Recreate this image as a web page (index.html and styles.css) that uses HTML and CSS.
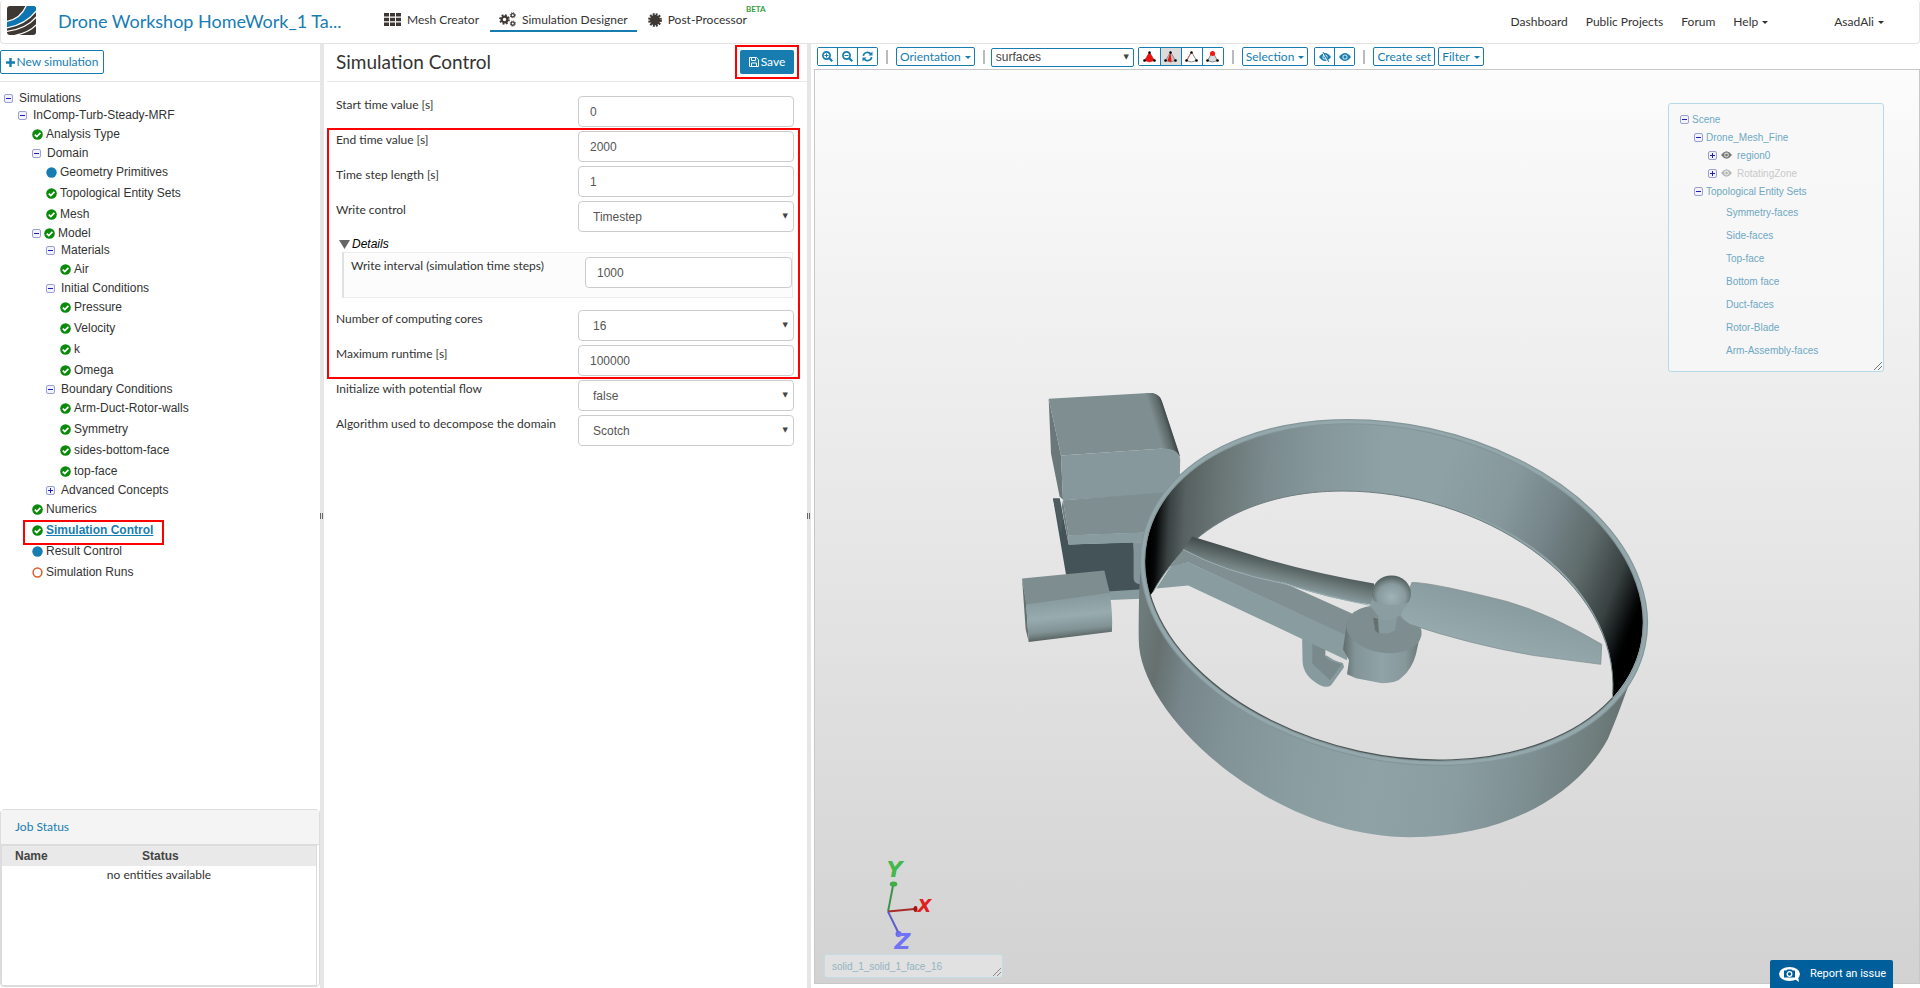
FILE: index.html
```html
<!DOCTYPE html>
<html lang="en">
<head>
<meta charset="utf-8">
<title>Simulation Designer</title>
<link rel="stylesheet" href="styles.css">
</head>
<body>
<svg class="defs" width="0" height="0" aria-hidden="true">
  <symbol id="minus" viewBox="0 0 9 9"><rect x=".5" y=".5" width="8" height="8" rx="1.5" fill="#f2f2fc" stroke="#9aa0d0"/><path d="M2 4.5h5" stroke="#2020b0"/></symbol>
  <symbol id="plus" viewBox="0 0 9 9"><rect x=".5" y=".5" width="8" height="8" rx="1.5" fill="#f2f2fc" stroke="#9aa0d0"/><path d="M2 4.5h5M4.5 2v5" stroke="#2020b0"/></symbol>
  <symbol id="ok" viewBox="0 0 11 11"><circle cx="5.5" cy="5.5" r="5.3" fill="#0a8a0a"/><path d="M2.8 5.6l2 2 3.6-3.7" fill="none" stroke="#fff" stroke-width="1.7"/></symbol>
  <symbol id="dot" viewBox="0 0 11 11"><circle cx="5.5" cy="5.5" r="5.2" fill="#177db1"/></symbol>
  <symbol id="ring" viewBox="0 0 11 11"><circle cx="5.5" cy="5.5" r="4.4" fill="none" stroke="#dd5a2b" stroke-width="1.5"/></symbol>
  <symbol id="eye" viewBox="0 0 12 8"><path d="M0 4Q6-4 12 4Q6 12 0 4z" fill="currentColor"/><circle cx="6" cy="4" r="2.6" fill="#fff" opacity=".75"/><circle cx="6" cy="4" r="1.5" fill="currentColor"/></symbol>
  <symbol id="cog" viewBox="0 0 12 12"><circle cx="6" cy="6" r="3.1" fill="none" stroke="currentColor" stroke-width="2.4"/><circle cx="6" cy="6" r="4.9" fill="none" stroke="currentColor" stroke-width="1.8" stroke-dasharray="2 1.85"/></symbol>
</svg>

<header class="topbar">
  <a class="logo" href="#" aria-label="Home">
    <svg width="29" height="29" viewBox="0 0 29 29">
      <clipPath id="logoclip"><rect width="29" height="29" rx="3"/></clipPath>
      <g clip-path="url(#logoclip)">
        <rect width="29" height="29" fill="#3d3833"/>
        <path d="M0 15.500Q14 13 19.500 0H29V5Q19 19 0 22z" fill="#0d76b0"/>
        <path d="M-1 15.500Q14 13 19.500-1M-1 22Q19 19 30 4M-1 25.500Q20 23 30 10M8 29.500Q23 26 30 18" fill="none" stroke="#fff" stroke-width="1.300"/>
      </g>
    </svg>
  </a>
  <a class="project" href="#">Drone Workshop HomeWork_1 Ta...</a>
  <nav class="modes">
    <a href="#" class="mode">
      <svg width="17" height="13" viewBox="0 0 17 13" fill="#3d3833"><path d="M0 0h5v3.500H0zM6 0h5v3.500H6zM12 0h5v3.500h-5zM0 4.700h5v3.500H0zM6 4.700h5v3.500H6zM12 4.700h5v3.500h-5zM0 9.400h5v3.500H0zM6 9.400h5v3.500H6zM12 9.400h5v3.500h-5z"/></svg>
      Mesh Creator</a>
    <a href="#" class="mode active">
      <svg width="17" height="15" viewBox="0 0 17 15"><use href="#cog" x="0" y="2" width="11" height="11"/><use href="#cog" x="10.500" y="0" width="6.500" height="6.500"/><use href="#cog" x="10.500" y="8.300" width="6.500" height="6.500"/></svg>
      Simulation Designer</a>
    <a href="#" class="mode">
      <svg width="14" height="14" viewBox="0 0 14 14"><circle cx="7" cy="7" r="5.200" fill="#3d3833"/><circle cx="7" cy="7" r="5.800" fill="none" stroke="#3d3833" stroke-width="2.200" stroke-dasharray="1.900 1.140"/></svg>
      Post-Processor<sup class="beta">BETA</sup></a>
  </nav>
  <nav class="links">
    <a href="#">Dashboard</a>
    <a href="#">Public Projects</a>
    <a href="#">Forum</a>
    <a href="#" class="caret">Help</a>
    <a href="#" class="caret user">AsadAli</a>
  </nav>
</header>

<main class="workspace">
  <aside class="sidebar">
    <div class="sidebar-head"><button class="btn-outline" type="button"><svg width="9" height="9" viewBox="0 0 9 9"><path d="M4.500 0v9M0 4.500h9" stroke="currentColor" stroke-width="2.400"/></svg>New simulation</button></div>
    <ul class="tree">
      <li><span class="folder"><svg class="tg"><use href="#minus"/></svg>Simulations</span>
      <ul>
        <li><span class="folder"><svg class="tg"><use href="#minus"/></svg>InComp-Turb-Steady-MRF</span>
        <ul>
          <li class="leaf"><svg class="st"><use href="#ok"/></svg>Analysis Type</li>
          <li><span class="folder"><svg class="tg"><use href="#minus"/></svg>Domain</span>
            <ul>
              <li class="leaf"><svg class="st"><use href="#dot"/></svg>Geometry Primitives</li>
              <li class="leaf"><svg class="st"><use href="#ok"/></svg>Topological Entity Sets</li>
              <li class="leaf"><svg class="st"><use href="#ok"/></svg>Mesh</li>
            </ul></li>
          <li><span class="folder tight"><svg class="tg"><use href="#minus"/></svg><svg class="st"><use href="#ok"/></svg>Model</span>
            <ul>
              <li><span class="folder"><svg class="tg"><use href="#minus"/></svg>Materials</span>
                <ul><li class="leaf"><svg class="st"><use href="#ok"/></svg>Air</li></ul></li>
              <li><span class="folder"><svg class="tg"><use href="#minus"/></svg>Initial Conditions</span>
                <ul>
                  <li class="leaf"><svg class="st"><use href="#ok"/></svg>Pressure</li>
                  <li class="leaf"><svg class="st"><use href="#ok"/></svg>Velocity</li>
                  <li class="leaf"><svg class="st"><use href="#ok"/></svg>k</li>
                  <li class="leaf"><svg class="st"><use href="#ok"/></svg>Omega</li>
                </ul></li>
              <li><span class="folder"><svg class="tg"><use href="#minus"/></svg>Boundary Conditions</span>
                <ul>
                  <li class="leaf"><svg class="st"><use href="#ok"/></svg>Arm-Duct-Rotor-walls</li>
                  <li class="leaf"><svg class="st"><use href="#ok"/></svg>Symmetry</li>
                  <li class="leaf"><svg class="st"><use href="#ok"/></svg>sides-bottom-face</li>
                  <li class="leaf"><svg class="st"><use href="#ok"/></svg>top-face</li>
                </ul></li>
              <li><span class="folder"><svg class="tg"><use href="#plus"/></svg>Advanced Concepts</span></li>
            </ul></li>
          <li class="leaf"><svg class="st"><use href="#ok"/></svg>Numerics</li>
          <li class="leaf marked"><svg class="st"><use href="#ok"/></svg><a class="current" href="#">Simulation Control</a></li>
          <li class="leaf"><svg class="st"><use href="#dot"/></svg>Result Control</li>
          <li class="leaf"><svg class="st"><use href="#ring"/></svg>Simulation Runs</li>
        </ul></li>
      </ul></li>
    </ul>
    <section class="jobs">
      <h2>Job Status</h2>
      <div class="jobs-body">
        <table>
          <thead><tr><th class="name">Name</th><th>Status</th></tr></thead>
          <tbody><tr><td colspan="2">no entities available</td></tr></tbody>
        </table>
      </div>
    </section>
  </aside>
  <div class="splitter"></div>

  <section class="settings">
    <div class="settings-head">
      <h1>Simulation Control</h1>
      <div class="save-wrap"><button class="save" type="button"><svg width="10" height="10" viewBox="0 0 10 10" fill="none" stroke="#fff"><path d="M.5.500h6.800L9.500 2.700v6.800h-9zM2.500.500v3h4v-3M2.500 9.500v-3.500h5v3.500"/></svg>Save</button></div>
    </div>
    <form class="form">
      <div class="row"><label for="start">Start time value [s]</label><input id="start" type="text" value="0"></div>
      <div class="marked-group">
        <div class="row"><label for="end">End time value [s]</label><input id="end" type="text" value="2000"></div>
        <div class="row"><label for="step">Time step length [s]</label><input id="step" type="text" value="1"></div>
        <div class="row"><label for="write">Write control</label><div class="select"><select id="write"><option>Timestep</option></select></div></div>
        <div class="details-title"><svg width="11" height="9" viewBox="0 0 11 9"><path d="M0 0h11L5.500 9z" fill="#666"/></svg>Details</div>
        <div class="details"><label for="interval">Write interval (simulation time steps)</label><input id="interval" type="text" value="1000"></div>
        <div class="row"><label for="cores">Number of computing cores</label><div class="select"><select id="cores"><option>16</option></select></div></div>
        <div class="row"><label for="max">Maximum runtime [s]</label><input id="max" type="text" value="100000"></div>
      </div>
      <div class="row"><label for="pot">Initialize with potential flow</label><div class="select"><select id="pot"><option>false</option></select></div></div>
      <div class="row"><label for="algo">Algorithm used to decompose the domain</label><div class="select"><select id="algo"><option>Scotch</option></select></div></div>
    </form>
  </section>
  <div class="splitter"></div>

  <section class="viewer">
    <div class="toolbar">
      <div class="group">
        <button type="button" aria-label="Zoom in"><svg width="11" height="11" viewBox="0 0 11 11" fill="none" stroke="currentColor"><circle cx="4.500" cy="4.500" r="3.600" stroke-width="1.700"/><path d="M7.200 7.200l3 3" stroke-width="2.200"/><path d="M2.500 4.500h4M4.500 2.500v4"/></svg></button>
        <button type="button" aria-label="Zoom out"><svg width="11" height="11" viewBox="0 0 11 11" fill="none" stroke="currentColor"><circle cx="4.500" cy="4.500" r="3.600" stroke-width="1.700"/><path d="M7.200 7.200l3 3" stroke-width="2.200"/><path d="M2.500 4.500h4"/></svg></button>
        <button type="button" aria-label="Reset"><svg width="11" height="11" viewBox="0 0 11 11" fill="none" stroke="currentColor" stroke-width="1.700"><path d="M1.300 4.800a4.200 4.200 0 0 1 7.600-1.500M9.700 6.200a4.200 4.200 0 0 1-7.600 1.500"/><path d="M10.500.500v4h-4zM.500 10.500v-4h4z" fill="currentColor" stroke="none"/></svg></button>
      </div>
      <i class="sep"></i>
      <button type="button" class="tool caret">Orientation</button>
      <i class="sep"></i>
      <div class="select pick"><select aria-label="Pick mode"><option>surfaces</option></select></div>
      <div class="group shapes">
        <button type="button" aria-label="Volumes"><svg width="13" height="12" viewBox="0 0 13 12"><path d="M6.500 1L1.500 9.500l5 1.500 5-1.500z" fill="#e11" stroke="#a11" stroke-width=".500"/><circle cx="6.500" cy="1.500" r="1.200"/><circle cx="1.500" cy="9.500" r="1.300"/><circle cx="11.500" cy="9.500" r="1.300"/></svg></button>
        <button type="button" class="on" aria-label="Surfaces"><svg width="13" height="12" viewBox="0 0 13 12"><path d="M6.500 1L1.500 9.500l5 1.500 5-1.500z" fill="#bbb" stroke="#777" stroke-width=".700"/><path d="M6.500 1L3.500 10.100l4 .800z" fill="#e11"/><circle cx="6.500" cy="1.500" r="1.200"/><circle cx="1.500" cy="9.500" r="1.300"/><circle cx="11.500" cy="9.500" r="1.300"/></svg></button>
        <button type="button" aria-label="Edges"><svg width="13" height="12" viewBox="0 0 13 12"><path d="M6.500 1L1.500 9.500l5 1.500 5-1.500z" fill="#fff" stroke="#888"/><path d="M6.500 1L2 9" stroke="#e55"/><circle cx="6.500" cy="1.500" r="1.200"/><circle cx="1.500" cy="9.500" r="1.300"/><circle cx="11.500" cy="9.500" r="1.300"/></svg></button>
        <button type="button" aria-label="Points"><svg width="13" height="12" viewBox="0 0 13 12"><path d="M6.500 1L1.500 9.500l5 1.500 5-1.500z" fill="#ddd" stroke="#888"/><circle cx="6.500" cy="2.500" r="2.500" fill="#f11"/><circle cx="1.500" cy="9.500" r="1.300"/><circle cx="11.500" cy="9.500" r="1.300"/></svg></button>
      </div>
      <i class="sep"></i>
      <button type="button" class="tool caret">Selection</button>
      <div class="group">
        <button type="button" aria-label="Hide"><svg width="12" height="10" viewBox="0 0 12 10"><use href="#eye" y="1" width="12" height="8"/><path d="M3 0l6 10" stroke="#fff"/><path d="M4 0l6 10" stroke="currentColor"/></svg></button>
        <button type="button" aria-label="Show"><svg width="12" height="8"><use href="#eye"/></svg></button>
      </div>
      <i class="sep"></i>
      <button type="button" class="tool">Create set</button>
      <button type="button" class="tool caret">Filter</button>
    </div>

    <div class="canvas">
      <svg class="model" viewBox="815 70 1104 914" preserveAspectRatio="xMidYMid meet" role="img" aria-label="Ducted rotor geometry">
        <defs>
          <linearGradient id="wallLeft" gradientUnits="userSpaceOnUse" x1="1149" y1="570" x2="1399" y2="582">
            <stop offset="0" stop-color="#000"/><stop offset=".02" stop-color="#060808"/><stop offset=".07" stop-color="#3a4242"/><stop offset=".13" stop-color="#566160"/><stop offset=".26" stop-color="#697574"/><stop offset=".45" stop-color="#7a8a8d"/><stop offset=".65" stop-color="#85979b"/><stop offset=".92" stop-color="#8ea1a5"/>
          </linearGradient>
          <linearGradient id="wallRight" gradientUnits="userSpaceOnUse" x1="1440" y1="480" x2="1656" y2="566">
            <stop offset="0" stop-color="#8ea1a5"/><stop offset=".3" stop-color="#86989c"/><stop offset=".5" stop-color="#75858a"/><stop offset=".7" stop-color="#5f6b6b"/><stop offset=".87" stop-color="#394141"/><stop offset=".98" stop-color="#060808"/><stop offset="1" stop-color="#000"/>
          </linearGradient>
          <linearGradient id="wallOut" gradientUnits="userSpaceOnUse" x1="1139" y1="640" x2="1640" y2="720">
            <stop offset="0" stop-color="#6d7b7b"/><stop offset=".04" stop-color="#66706f"/><stop offset=".1" stop-color="#76868a"/><stop offset=".2" stop-color="#829397"/><stop offset=".35" stop-color="#8a9da0"/><stop offset=".5" stop-color="#8fa2a6"/><stop offset=".66" stop-color="#8a9da0"/><stop offset=".8" stop-color="#7e8f92"/><stop offset=".92" stop-color="#6f7d7d"/><stop offset="1" stop-color="#5f6a69"/>
          </linearGradient>
          <linearGradient id="edge" gradientUnits="userSpaceOnUse" x1="460" y1="120" x2="515" y2="103">
            <stop offset="0" stop-color="#7f8e90"/><stop offset=".5" stop-color="#5c6868"/><stop offset="1" stop-color="#1b2020"/>
          </linearGradient>
          <linearGradient id="cyl" gradientUnits="userSpaceOnUse" x1="200" y1="655" x2="212" y2="775">
            <stop offset="0" stop-color="#879a9d"/><stop offset=".45" stop-color="#98acb0"/><stop offset=".8" stop-color="#819294"/><stop offset="1" stop-color="#596463"/>
          </linearGradient>
          <linearGradient id="bladeL" gradientUnits="userSpaceOnUse" x1="1290" y1="561" x2="1284" y2="588">
            <stop offset="0" stop-color="#454f4f"/><stop offset=".5" stop-color="#6a7777"/><stop offset="1" stop-color="#8b9ea1"/>
          </linearGradient>
          <linearGradient id="bladeR" gradientUnits="userSpaceOnUse" x1="1500" y1="595" x2="1485" y2="650">
            <stop offset="0" stop-color="#879a9d"/><stop offset="1" stop-color="#97abaf"/>
          </linearGradient>
          <linearGradient id="motor" gradientUnits="userSpaceOnUse" x1="1343" y1="0" x2="1421" y2="0">
            <stop offset="0" stop-color="#5f6c6c"/><stop offset=".15" stop-color="#829497"/><stop offset=".5" stop-color="#90a3a7"/><stop offset=".8" stop-color="#87989b"/><stop offset="1" stop-color="#667372"/>
          </linearGradient>
          <radialGradient id="ball" cx=".5" cy=".6" r=".6"><stop offset="0" stop-color="#a0b3b7"/><stop offset=".6" stop-color="#889a9d"/><stop offset="1" stop-color="#4f5a5a"/></radialGradient>
          <clipPath id="mouth"><ellipse cx="1394" cy="592.500" rx="252.500" ry="164" transform="rotate(12 1394 592.500)"/></clipPath>
          <clipPath id="front"><path d="M1130 590L1613 697V800H1130z"/></clipPath>
        </defs>

        <g transform="translate(1000 380) scale(.33333)">
          <path d="M158 357L178 357L205 495L400 488L405 605L435 625V640L328 640L197 585z" fill="#445357"/>
          <path d="M158 357h20l10 60-6 50z" fill="#4d5c5f"/>
          <path d="M145 57L182 228L188 360L178 352L152 222z" fill="#6b7879"/>
          <path d="M145 57L445 40Q478 42 485 65L538 225L490 207L182 228z" fill="#7f8e90"/>
          <path d="M435 41L458 40Q480 45 485 65L540 232Q524 206 485 208z" fill="url(#edge)"/>
          <path d="M182 228L490 207Q535 207 540 240L538 340L188 362z" fill="#86989b"/>
          <path d="M188 362L500 338L560 380L430 460L205 468z" fill="#7f8e90"/>
          <path d="M188 362L205 468V495L184 380z" fill="#728183"/>
          <path d="M205 467L440 458V488L205 495z" fill="#889b9e"/>
          <path d="M400 488H440V620L412 613Q400 608 400 595z" fill="#83959a"/>
          <path d="M322 636L440 629V657L330 662z" fill="#879a9d"/>
          <path d="M65 597L312 573L330 645L78 678z" fill="#7e8e90"/>
          <path d="M65 597L78 675L85 788L76 750z" fill="#65706f"/>
          <path d="M77 675L328 640Q338 700 335 757L85 788z" fill="url(#cyl)"/>
        </g>

        <g clip-path="url(#mouth)">
          <path d="M1100 660L1153 592C1190 525 1260 491.500 1343 491.500C1480 491.500 1620 580 1613 695L1613 760H1700V380H1100z" fill="url(#wallLeft)"/>
          <path d="M1400 380V497C1510 510 1620 590 1613 695L1613 760H1700V380z" fill="url(#wallRight)"/>
          <path d="M1153 592C1190 525 1260 491.500 1343 491.500C1480 491.500 1620 580 1613 695" fill="none" stroke="#6e7c7e" stroke-width="1"/>
        </g>

        <path d="M1302 636L1312 643V662L1326 656L1343 664L1344 668L1331 686Q1327 689 1320 686Q1303 677 1302.500 662z" fill="#879a9d"/>
        <path d="M1312 643L1326 650L1325 657Q1328 662 1342 665L1330 681L1312 664z" fill="#7a8a8c"/>
        <path d="M1325 651Q1326 659 1340 663L1346 662L1346 656z" fill="#dfdfdf"/>
        <path d="M1156 589L1171 566L1188 563L1347 636V661L1301 639L1188 586z" fill="#899c9f"/>
        <path d="M1183 550L1233 571L1283 583L1352 614L1346 636L1188 563L1170 567z" fill="#7f8f92"/>
        <path d="M1192 537L1267 560Q1320 575 1374 584L1378 606Q1330 601 1283 583Q1225 573 1183 550z" fill="url(#bladeL)"/>
        <path d="M1183 550Q1225 573 1283 584Q1330 598 1370 606" fill="none" stroke="#9bb0b4" stroke-width="1"/>

        <path d="M1347 622L1343 650L1349 661L1347 675L1356 679L1382 684Q1397 684 1402 678Q1412 670 1416 655L1421 632z" fill="url(#motor)"/>
        <ellipse cx="1384" cy="630" rx="38" ry="23.500" transform="rotate(9 1384 630)" fill="#7e8e90"/>
        <path d="M1373 618h24l-2 13q-10 6-20 0z" fill="#879a9d"/><path d="M1373 618l2 13 4 3-1-15z" fill="#66716f"/>
        <path d="M1412 583Q1432 583 1507 602Q1552 615 1602 645L1601 665L1533 656Q1470 645 1410 625Q1402 620 1400 616z" fill="url(#bladeR)" stroke="#7c8b8d" stroke-width=".700"/>
        <path d="M1370 606L1373 597H1410L1401 615Q1390 624 1380 619z" fill="#8b9da0"/>
        <ellipse cx="1391.500" cy="594" rx="19.500" ry="18" fill="url(#ball)"/>
        <path d="M1373 601Q1391 610 1410 602Q1402 614 1391 614Q1378 613 1373 601z" fill="#8b9da0"/>

        <path d="M1144.800 539.100C1139 560 1138.500 600 1138.500 640C1138 715 1270 838 1410 838C1500 838 1575 800 1608 740C1618 718 1630 682 1637 664L1645.500 641L1643.200 646.900A255 166 12.200 0 1 1144.800 539.100z" fill="url(#wallOut)"/>
        <g fill="none">
          <ellipse cx="1394" cy="593" rx="255" ry="166" transform="rotate(12.200 1394 593)" stroke="#84969a" stroke-width="5.400"/>
          <ellipse cx="1394" cy="593" rx="255" ry="166" transform="rotate(12.200 1394 593)" stroke="#94a8ac" stroke-width="3"/>
          <g clip-path="url(#front)"><ellipse cx="1394" cy="592.500" rx="252.300" ry="163.300" transform="rotate(12.200 1394 592.500)" stroke="#4b5657" stroke-width="1.200"/></g>
        </g>

        <g class="axes">
          <path d="M887.500 912.500L893 884" stroke="#3e8f48" stroke-width="2"/><ellipse cx="893" cy="885" rx="3.800" ry="2.600" fill="#3fae45"/>
          <path d="M887.500 912.500L914 910" stroke="#a82c2c" stroke-width="2"/><ellipse cx="915" cy="910" rx="2" ry="3" fill="#a11"/>
          <path d="M887.500 912.500L898 934" stroke="#5c5cc8" stroke-width="2"/><circle cx="898" cy="935" r="3" fill="#6767ee"/>
          <text x="886" y="878" class="axis-big" fill="#44b848">Y</text>
          <text x="917" y="913" class="axis-small" fill="#e02020">X</text>
          <text x="894" y="950" class="axis-big" fill="#7272f5">Z</text>
        </g>
      </svg>

      <div class="scene">
        <ul>
          <li><span class="folder"><svg class="tg"><use href="#minus"/></svg>Scene</span>
          <ul>
            <li><span class="folder"><svg class="tg"><use href="#minus"/></svg>Drone_Mesh_Fine</span>
              <ul>
                <li><span class="folder"><svg class="tg"><use href="#plus"/></svg><svg class="eye" width="11" height="8"><use href="#eye"/></svg>region0</span></li>
                <li><span class="folder off"><svg class="tg"><use href="#plus"/></svg><svg class="eye" width="11" height="8"><use href="#eye"/></svg>RotatingZone</span></li>
              </ul></li>
            <li><span class="folder"><svg class="tg"><use href="#minus"/></svg>Topological Entity Sets</span>
              <ul class="faces">
                <li>Symmetry-faces</li><li>Side-faces</li><li>Top-face</li><li>Bottom face</li><li>Duct-faces</li><li>Rotor-Blade</li><li>Arm-Assembly-faces</li>
              </ul></li>
          </ul></li>
        </ul>
        <svg class="grip" width="8" height="8" viewBox="0 0 8 8"><path d="M0 8L8 0M4 8l4-4" stroke="#777"/></svg>
      </div>
      <div class="picked">solid_1_solid_1_face_16<svg class="grip" width="8" height="8" viewBox="0 0 8 8"><path d="M0 8L8 0M4 8l4-4" stroke="#888"/></svg></div>
    </div>
  </section>
</main>
<button class="report" type="button"><svg width="21" height="15" viewBox="0 0 21 15"><ellipse cx="10.500" cy="7" rx="10.500" ry="7" fill="#fff"/><path d="M14 11l6 4-1-6z" fill="#fff"/><path d="M5 3.500h2.500l1-1h4l1 1H16v7H5z" fill="#005f9a"/><circle cx="10.500" cy="7" r="2.300" fill="none" stroke="#fff" stroke-width="1.300"/></svg>Report an issue</button>
</body>
</html>
```
FILE: styles.css
```css
*, ::before, ::after { box-sizing: border-box; }
body {
  margin: 0;
  height: 100vh;
  display: flex;
  flex-direction: column;
  overflow: hidden;
  background: #fff;
  color: #333;
  font: 12px/18px Lato, "Open Sans", sans-serif;
}
ul { list-style: none; margin: 0; padding: 0; }
a { color: inherit; text-decoration: none; }
h1, h2 { margin: 0; font-weight: 400; }
svg { flex: none; }
.defs { position: absolute; }
button, input, select { font: inherit; color: inherit; margin: 0; }

.topbar {
  display: flex;
  align-items: center;
  height: 44px;
  flex: none;
  padding: 0 35px 2px 6px;
  border: 1px solid #e4e4e4;
  border-top: 0;
  border-radius: 4px;
}
.logo { display: flex; margin-right: 22px; }
.project { color: #177db1; font-size: 18px; line-height: 24px; width: 306px; white-space: nowrap; }
.modes { display: flex; gap: 2px; }
.mode {
  position: relative;
  display: flex;
  align-items: center;
  gap: 6px;
  height: 22px;
  padding: 0 9px;
  border-bottom: 2px solid transparent;
  white-space: nowrap;
}
.mode.active { border-color: #177db1; }
.mode svg { color: #3d3833; }
.mode:first-child { padding-left: 20px; }
.beta { position: absolute; left: 100%; top: -6px; margin-left: -10px; font-size: 8px; line-height: 10px; font-weight: 700; color: #2f9e3c; }
.links { display: flex; gap: 18px; margin: 2px 0 0 auto; }
.caret::after {
  content: "";
  display: inline-block;
  margin-left: 4px;
  vertical-align: 2px;
  border: 3px solid transparent;
  border-top-color: currentColor;
  border-bottom: 0;
}
.user { margin-left: 48px; }

.workspace {
  flex: 1;
  min-height: 0;
  display: grid;
  grid-template-columns: 320px 4px 483px 4px minmax(0, 1fr);
}
.splitter { background: #e6e6e6; position: relative; }
.splitter::after { content: ""; position: absolute; left: 0; top: 50%; width: 3px; height: 6px; margin-top: -3px; border: solid #666; border-width: 0 1px; }

.sidebar { display: flex; flex-direction: column; min-height: 0; font-family: "Liberation Sans", Arial, sans-serif; }
.sidebar-head { border-bottom: 1px solid #e4e4e4; padding: 6px 0 7px; }
.btn-outline {
  display: inline-flex;
  align-items: center;
  justify-content: center;
  gap: 2px;
  width: 104px;
  height: 24px;
  padding: 0;
  border: 1px solid #177db1;
  border-radius: 2px;
  background: #fff;
  color: #177db1;
  font: 12px/18px Lato, sans-serif;
}
.tree { padding: 8px 0 0 4px; }
.tree ul { padding-left: 14px; }
.folder { display: flex; align-items: center; gap: 6px; height: 17px; line-height: 17px; }
.folder.tight { gap: 3px; }
.leaf { display: flex; align-items: center; gap: 3px; height: 21px; line-height: 21px; }
.tg { width: 9px; height: 9px; }
.st { width: 11px; height: 11px; }
.current { color: #177db1; font-weight: 700; text-decoration: underline; }
.marked { position: relative; }
.marked::after { content: ""; position: absolute; left: -9px; top: 0; width: 141px; height: 25px; border: 2px solid #f00; pointer-events: none; }

.jobs { margin: auto 0 1px 0; border: 1px solid #dcdcdc; border-radius: 4px; height: 178px; display: flex; flex-direction: column; }
.jobs h2 { font: 12px/34px Lato, sans-serif; color: #177db1; background: #f4f4f4; padding-left: 14px; border-bottom: 1px solid #dcdcdc; }
.jobs-body { flex: 1; margin-right: 2px; border: 1px solid #dcdcdc; }
.jobs table { width: 100%; border-collapse: collapse; }
.jobs th { background: #e9e9e9; color: #444; text-align: left; padding: 0; line-height: 20px; }
.jobs th.name { width: 140px; padding-left: 13px; }
.jobs td { text-align: center; padding: 0; font: 12px/18px Lato, sans-serif; }

.settings-head {
  display: flex;
  justify-content: space-between;
  margin-left: 3px;
  padding: 1px 8px 2px 9px;
  border-bottom: 1px solid #e8e8e8;
}
.settings h1 { font-size: 19px; line-height: 34px; }
.save-wrap { border: 2px solid #f00; padding: 3px; }
.save {
  display: flex;
  align-items: center;
  justify-content: center;
  gap: 2px;
  width: 54px;
  height: 24px;
  padding: 0;
  border: 0;
  border-radius: 2px;
  background: #177db1;
  color: #fff;
}
.form { padding: 14px 13px 0 12px; }
.row { display: flex; justify-content: space-between; height: 31px; margin-bottom: 4px; }
.row label { line-height: 18px; }
.row > input, .row > .select { flex: none; width: 216px; }
.form input, .form select {
  height: 31px;
  padding: 0 11px;
  border: 1px solid #ccc;
  border-radius: 4px;
  background: #fff;
  color: #555;
  font: 12px/18px "Liberation Sans", Arial, sans-serif;
}
.select { position: relative; }
select { appearance: none; width: 100%; }
.form select { padding: 0 14px; }
.select::after { content: "▼"; position: absolute; right: 6px; top: 6px; font: 7px/18px "DejaVu Sans", sans-serif; color: #444; pointer-events: none; }
.marked-group { position: relative; }
.marked-group::before { content: ""; position: absolute; inset: -3px -6px -3px -9px; border: 2px solid #f00; pointer-events: none; }
.details-title { display: flex; align-items: center; gap: 2px; height: 16px; padding-left: 3px; color: #000; font: italic 12px/16px "Liberation Sans", Arial, sans-serif; }
.details { display: flex; justify-content: space-between; margin: 0 1px 12px 6px; height: 46px; padding: 4px 0 0 7px; background: #fcfcfc; border: 1px solid #ececec; border-left: 2px solid #e0e0e0; }
.details input { flex: none; width: 207px; }

.viewer { display: flex; flex-direction: column; min-width: 0; padding: 3px 0 4px 3px; }
.toolbar { display: flex; align-items: flex-start; height: 22px; padding-left: 3px; color: #177db1; }
.group { display: flex; border: 1px solid #177db1; border-radius: 2px; height: 19px; }
.group button { display: grid; place-items: center; width: 20px; padding: 0; border: 0; background: #fff; }
.group button:first-child { width: 19px; }
.group.shapes button { width: 21px; }
.group button + button { border-left: 1px solid #177db1; }
.group .on { background: #dcdcdc; }
.sep { width: 2px; height: 14px; margin: 3px 8px; background: #bbb; }
.tool { height: 19px; padding: 0 3px; line-height: 15px; border: 1px solid #177db1; border-radius: 2px; background: #fff; white-space: nowrap; }
.tool + .tool { margin-left: 3px; }
.tool + .group { margin-left: 6px; }
.pick { width: 143px; margin: 1px 4px 0 -2px; }
.pick select { display: block; height: 19px; padding: 0 4px; border: 1px solid #177db1; border-radius: 2px; background: #fff; color: #444; font: 12px/15px "Liberation Sans", Arial, sans-serif; }
.pick::after { top: 0; right: 5px; }

.canvas { position: relative; flex: 1; min-height: 0; border: 1px solid #c8c8c8; background: linear-gradient(#fcfcfc, #d2d2d2); }
.model { position: absolute; inset: 0; width: 100%; height: 100%; }
.axes text { font-family: "DejaVu Sans", sans-serif; font-weight: 700; font-style: italic; }
.axis-big { font-size: 22px; }
.axis-small { font-size: 18px; }
.scene {
  position: absolute;
  top: 33px;
  right: 35px;
  width: 216px;
  min-height: 269px;
  padding: 6px 0 0 11px;
  border: 1px solid #b5dae8;
  border-radius: 3px;
  background: rgba(247, 247, 247, .8);
  color: #6fa8c3;
  font: 10px/18px "Liberation Sans", Arial, sans-serif;
}
.scene ul ul { padding-left: 14px; }
.scene .folder { height: 18px; gap: 3px; }
.scene .eye { color: #777; margin: 0 2px 0 1px; }
.scene .off { color: #c8c8c8; }
.scene .off .eye { color: #b5b5b5; }
.scene .faces { padding: 1px 0 0 32px; line-height: 23px; }
.grip { position: absolute; right: 1px; bottom: 1px; }
.picked {
  position: absolute;
  left: 9px;
  bottom: 5px;
  width: 179px;
  height: 24px;
  padding-left: 7px;
  border: 1px solid #c3dbe4;
  border-radius: 3px;
  background: rgba(235, 235, 235, .6);
  color: #93b3c2;
  font: 10px/24px "Liberation Sans", Arial, sans-serif;
}
.report {
  position: absolute;
  right: 27px;
  bottom: 0;
  display: flex;
  align-items: center;
  gap: 10px;
  width: 123px;
  height: 28px;
  padding: 0 0 0 9px;
  border: 0;
  border-radius: 2px 2px 0 0;
  background: #005f9a;
  color: #fff;
  font: 11px/18px Roboto, sans-serif;
  white-space: nowrap;
}
```
